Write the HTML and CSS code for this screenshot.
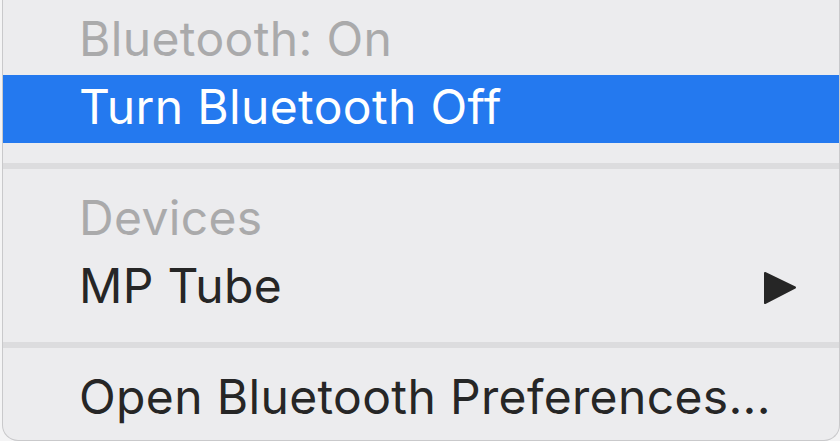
FILE: index.html
```html
<!DOCTYPE html>
<html lang="en">

<head>
  <meta charset="UTF-8" />
  <title>Bluetooth Menu</title>
  <meta name="viewport" content="width=device-width, initial-scale=1.0">
  <link rel="stylesheet" href="styles.css">
</head>

<body>

  <!-- Status bar dropdown -->
  <div class="menu">
    <div class="item disabled">Bluetooth: On</div>
    <div class="item active">Turn Bluetooth Off</div>

    <div class="separator"></div>

    <div class="item disabled">Devices</div>
    <div class="item submenu">
      <span>MP Tube</span>
      <svg class="arrow" width="34" height="34" viewBox="0 0 34 34">
        <path d="M2 2 L32 16.5 L2 32 Z" fill="#262626" stroke="#262626" stroke-width="2" stroke-linejoin="round" />
      </svg>
    </div>

    <div class="separator"></div>

    <div class="item">Open Bluetooth Preferences...</div>
  </div>

</body>

</html>
```

FILE: styles.css
```css
* {
  margin: 0;
  padding: 0;
  box-sizing: border-box;
  font-family: 'Inter', 'Liberation Sans', sans-serif;
}

body {
  height: 100vh;
  background: #f4f4f5;
  overflow: hidden;
}

/* === Menu Panel === */
.menu {
  width: 838px;
  height: 441px;
  margin-left: 2px;
  padding: 7px 0 8px;
  background: #ececee;
  border-left: 1px solid #c9c9cb;
  border-right: 1px solid #c9c9cb;
  border-bottom: 1px solid #c9c9cb;
  border-radius: 0 0 16px 16px;
}

.item {
  height: 68px;
  display: flex;
  align-items: center;
  justify-content: space-between;
  padding: 0 42px 6px 76px;
  font-size: 48px;
  letter-spacing: 0.35px;
  color: #262626;
  white-space: nowrap;
}

.item.disabled {
  color: #aaaaab;
}

.item.active {
  background: #2479ef;
  color: #ffffff;
}

.arrow {
  display: block;
  margin-top: 6px;
}

.separator {
  height: 6px;
  margin: 20px 0 17px;
  background: #dcdcde;
}
```
